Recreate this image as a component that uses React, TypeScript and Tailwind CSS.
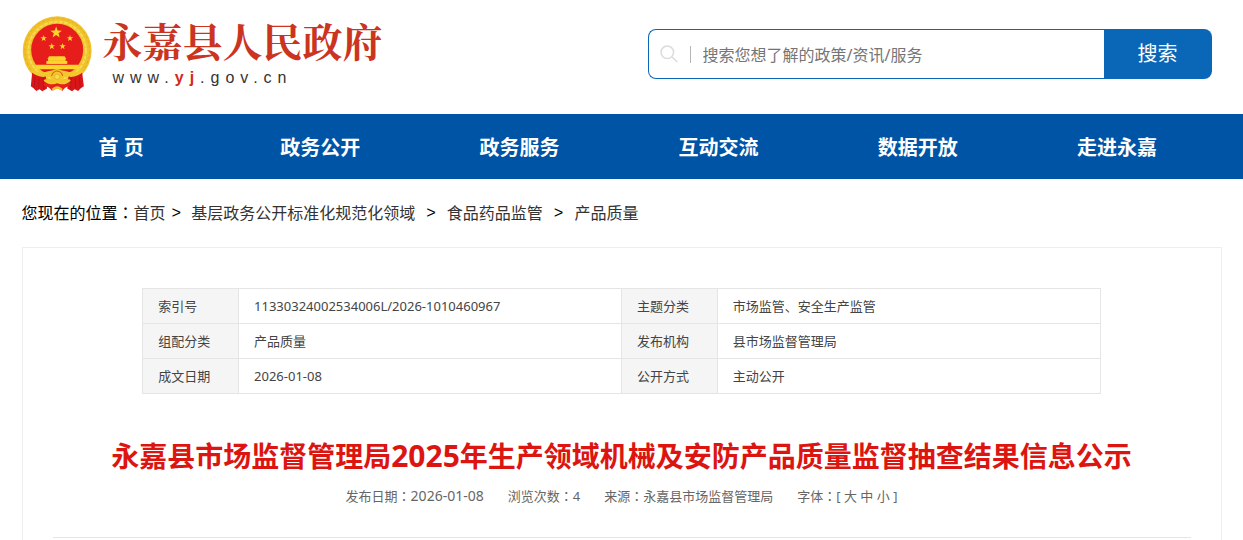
import React from "react";

const navItems = ["首 页", "政务公开", "政务服务", "互动交流", "数据开放", "走进永嘉"];

const crumbs = ["基层政务公开标准化规范化领域", "食品药品监管", "产品质量"];

const infoRows = [
  ["索引号", "11330324002534006L/2026-1010460967", "主题分类", "市场监管、安全生产监管"],
  ["组配分类", "产品质量", "发布机构", "县市场监督管理局"],
  ["成文日期", "2026-01-08", "公开方式", "主动公开"],
];

const STAR = "M0 -10 L2.4 -3.2 L9.5 -3.1 L3.8 1.2 L5.9 8.1 L0 4 L-5.9 8.1 L-3.8 1.2 L-9.5 -3.1 L-2.4 -3.2 Z";

function Emblem() {
  return (
    <svg viewBox="38 35 207 228" className="h-[77px] w-[70px] shrink-0" aria-hidden="true">
      <circle cx="142" cy="138" r="102" fill="#f0c22c" />
      <circle cx="142" cy="138" r="96" fill="none" stroke="#dfa51c" strokeWidth="2" strokeDasharray="10 5" />
      <circle cx="142" cy="137" r="85" fill="none" stroke="#f8da50" strokeWidth="6" strokeDasharray="12 3" />
      <circle cx="142" cy="135" r="77" fill="#e61d1b" />
      <g fill="#fbd42c">
        <path d={STAR} transform="translate(139 84) scale(1.8)" />
        <path d={STAR} transform="translate(102 101)" />
        <path d={STAR} transform="translate(180 101)" />
        <path d={STAR} transform="translate(126 125)" />
        <path d={STAR} transform="translate(158 125)" />
        {/* gate tower */}
        <path d="M118 154h46l5 8h-56z" />
        <path d="M115 162h52v6h-52z" />
        <path d="M110 168h62v9h-62z" />
        <path d="M80 179h124l6 14H74z" />
      </g>
      {/* ribbons */}
      <path d="M68 202 Q84 215 108 208 L112 250 L98 258 L90 252 L80 257 L72 249 L64 243 Z" fill="#d8161a" />
      <path d="M216 202 Q200 215 176 208 L172 250 L186 258 L194 252 L204 257 L212 249 L221 243 Z" fill="#d8161a" />
      <path d="M76 216l-2 30M88 220l-1 30M100 218l3 34M208 216l2 30M196 220l1 30M184 218l-3 34" stroke="#b01015" strokeWidth="2" />
      <path d="M66 192 Q88 208 118 198 L142 194 L166 198 Q196 208 218 192 L218 201 Q196 221 168 213 L142 224 L116 213 Q88 221 66 201 Z" fill="#f3c82b" />
      {/* cogwheel */}
      <path d="M120 214 A22 22 0 0 1 164 214 L158 226 L126 226 Z" fill="#f3c82b" />
      <path d="M126 213 A16 15 0 0 1 158 213" fill="none" stroke="#dc5a1c" strokeWidth="3" />
      <circle cx="142" cy="215" r="8" fill="#f8da4e" stroke="#dfa51c" strokeWidth="2" />
      <path d="M106 225 Q124 240 142 231 Q160 240 178 225 L182 241 Q164 246 158 256 L142 249 L126 256 Q120 246 102 241 Z" fill="#e6201c" />
      <path d="M104 224 Q122 240 142 230 Q162 240 180 224 M128 254 Q142 240 156 254" fill="none" stroke="#f3c82b" strokeWidth="7" />
    </svg>
  );
}

// full-width colon, centred in its em box
function Colon() {
  return <span className="font-['Noto_Sans_CJK_TC',sans-serif]">：</span>;
}

function Header() {
  return (
    <header className="mx-auto flex w-full max-w-[1200px] items-start justify-between pr-2.5">
      <a href="#" className="flex items-start gap-[11px] pt-4">
        <Emblem />
        <span className="flex flex-col">
          <span className="font-['Liberation_Serif','Noto_Serif_CJK_SC','Noto_Sans_CJK_SC',serif] text-[40px] leading-[56px] font-bold text-[#cb351f]">
            永嘉县人民政府
          </span>
          <span className="pl-2.5 font-['Liberation_Sans',sans-serif] text-base leading-3 tracking-[6px] text-[#333]">
            www.<b className="text-[#d32a1c]">yj</b>.gov.cn
          </span>
        </span>
      </a>

      <form className="mt-[29px] flex h-[50px] w-[564px]" onSubmit={(e) => e.preventDefault()}>
        <label
          htmlFor="keyword"
          className="flex flex-1 items-center rounded-l-lg border border-r-0 border-[#0a67b8] pl-[11px]"
        >
          <svg viewBox="0 0 18 18" className="size-[18px]" fill="none" stroke="#dcdcdc" strokeWidth="1.5" aria-hidden="true">
            <circle cx="7.3" cy="7.3" r="6.3" />
            <path d="M12 12l5.3 5" />
          </svg>
          <span className="ml-3 h-[17px] w-px bg-[#b5b5b5]" />
          <input
            id="keyword"
            type="text"
            aria-label="搜索"
            placeholder="搜索您想了解的政策/资讯/服务"
            className="ml-3 h-full min-w-0 flex-1 bg-transparent pt-0.5 text-base text-[#333] outline-none placeholder:text-[#757575]"
          />
        </label>
        <button type="submit" className="w-[108px] rounded-r-lg bg-[#0a67b8] text-xl text-white">
          搜索
        </button>
      </form>
    </header>
  );
}

function Nav() {
  return (
    <nav className="bg-[#0054a5]">
      <div className="mx-auto grid max-w-[1200px] grid-cols-6 pr-[5px]">
        {navItems.map((item) => (
          <a key={item} href="#" className="pt-0.5 text-center text-xl leading-[63px] font-bold text-white">
            {item}
          </a>
        ))}
      </div>
    </nav>
  );
}

function Breadcrumb() {
  return (
    <div className="mx-auto flex w-full max-w-[1200px] items-center text-base leading-[67px] text-black">
      <span>
        您现在的位置
        <Colon />
      </span>
      <a href="#" className="mr-1.5 text-[#333]">首页</a>
      {crumbs.map((name, i) => (
        <React.Fragment key={name}>
          <span className={i === 0 ? "mr-2.5 pt-0.5 font-['Liberation_Mono',monospace]" : "mx-[11px] pt-0.5 font-['Liberation_Mono',monospace]"}>
            <span className="block leading-[65px]">&gt;</span>
          </span>
          <a href="#" className="text-[#333]">{name}</a>
        </React.Fragment>
      ))}
    </div>
  );
}

function InfoTable() {
  return (
    <table className="mx-auto w-4/5 table-fixed border-collapse text-left text-[13px] leading-5 text-[#444]">
      <colgroup>
        <col className="w-[10%]" />
        <col className="w-[40%]" />
        <col className="w-[10%]" />
        <col className="w-[40%]" />
      </colgroup>
      <tbody>
        {infoRows.map((row) => (
          <tr key={row[0]} className="h-[35px]">
            {row.map((text, i) =>
              i % 2 === 0 ? (
                <th key={text} scope="row" className="border border-[#e5e5e5] bg-[#f5f5f5] px-[15px] font-normal">
                  {text}
                </th>
              ) : (
                <td key={text} className="border border-[#e5e5e5] px-[15px]">
                  {text}
                </td>
              )
            )}
          </tr>
        ))}
      </tbody>
    </table>
  );
}

export default function App() {
  return (
    <div className="flex min-h-screen flex-col bg-white font-['Noto_Sans','Noto_Sans_CJK_SC',sans-serif]">
      <div className="min-h-[114px]">
        <Header />
      </div>
      <Nav />
      <Breadcrumb />
      <main className="mx-auto w-full max-w-[1200px] flex-1 border border-b-0 border-[#eee] px-[30px] pt-10">
        <div className="-mx-[30px]">
          <InfoTable />
        </div>
        <h1 className="mt-[41px] text-center text-[28px] leading-[42px] font-bold text-[#dd1510]">
          永嘉县市场监督管理局<span className="text-3xl leading-[42px]">2025</span>年生产领域机械及安防产品质量监督抽查结果信息公示
        </h1>
        <div className="flex justify-center gap-6 border-b border-[#e5e5e5] pt-[9px] pb-[31px] text-[13px] leading-5 text-[#666]">
          <span>
            发布日期
            <Colon />
            <span className="text-sm">2026-01-08</span>
          </span>
          <span>
            浏览次数
            <Colon />4
          </span>
          <span>
            来源
            <Colon />
            永嘉县市场监督管理局
          </span>
          <span>
            字体
            <Colon />[ <button type="button">大</button> <button type="button">中</button>{" "}
            <button type="button">小</button> ]
          </span>
        </div>
      </main>
    </div>
  );
}
